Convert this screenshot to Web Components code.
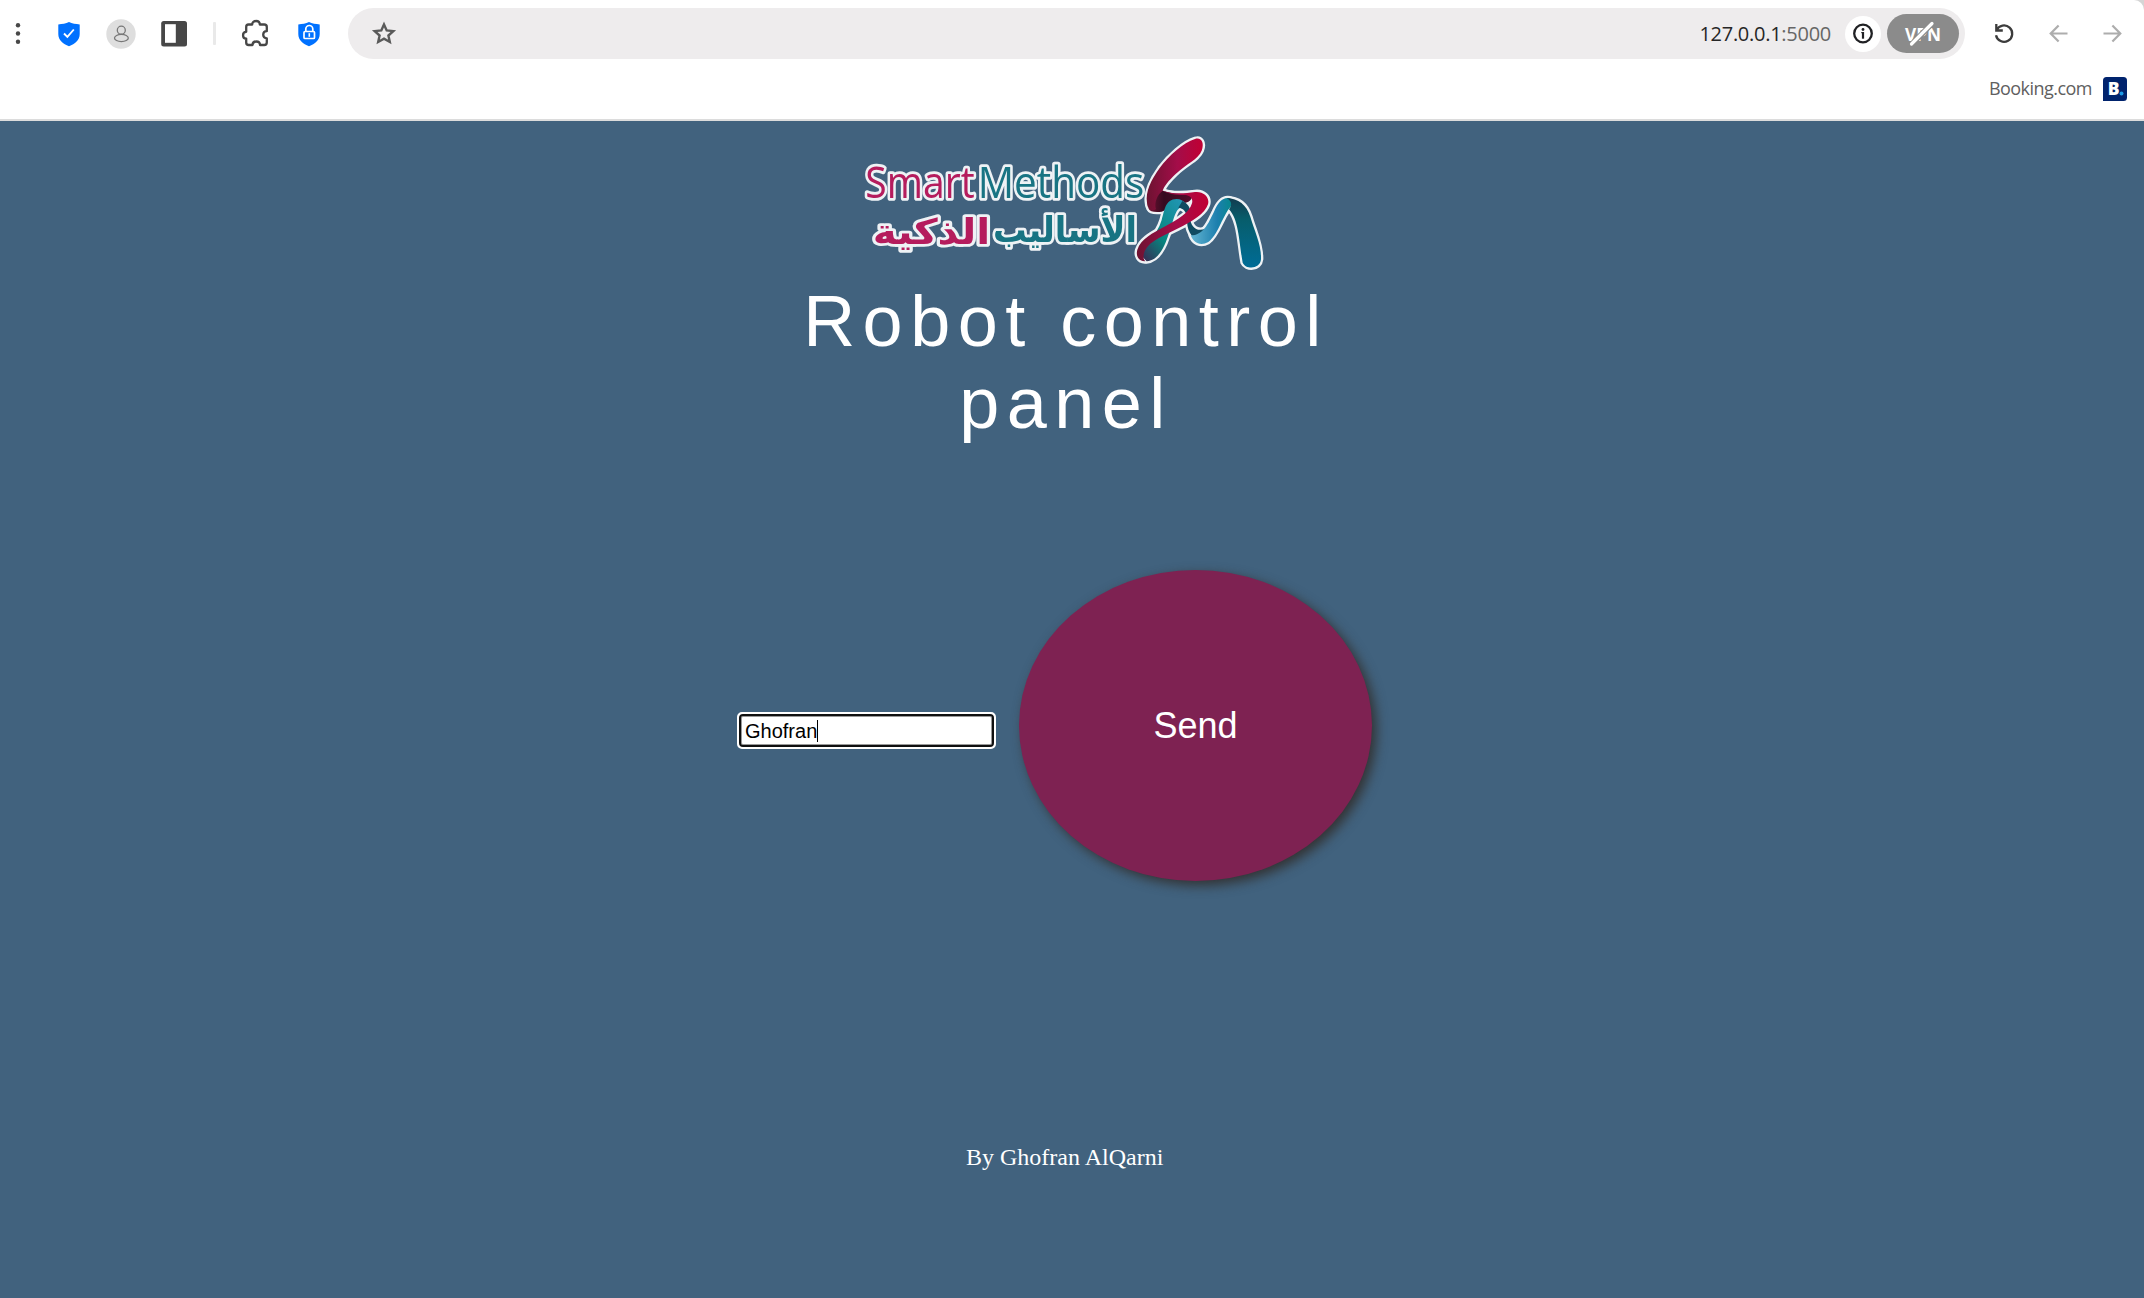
<!DOCTYPE html>
<html lang="en">
<head>
<meta charset="utf-8">
<title>Robot control panel</title>
<style>
html,body{margin:0;height:100%}
body{background:#41627e;overflow:hidden;display:flex;flex-direction:column}
</style>
</head>
<body>
<browser-bar></browser-bar>
<robot-page></robot-page>
<script>
const define=(name,html)=>customElements.define(name,class extends HTMLElement{
  constructor(){super();this.attachShadow({mode:'open'}).innerHTML=html;}
});

const shield='<path fill="#0071ff" d="M15 3.1 C18 4.8 22 5 25.7 5.4 V15 C25.7 21 21 25 15 27.2 C9 25 4.3 21 4.3 15 V5.4 C8 5 12 4.800 15 3.1Z"/>';
const icons={
 dots:'<g fill="#474747"><circle cx="15" cy="6.200" r="2.200"/><circle cx="15" cy="14.500" r="2.200"/><circle cx="15" cy="22.800" r="2.200"/></g>',
 check:shield+'<path d="M10 14.500l3.400 3.400 6.400-7.400" fill="none" stroke="#fff" stroke-width="1.900"/>',
 person:'<circle cx="15" cy="15" r="14.700" fill="#dedede"/><g fill="none" stroke="#777" stroke-width="1.300"><circle cx="15.300" cy="11.200" r="4"/><ellipse cx="15.400" cy="19" rx="6.900" ry="3.600"/></g>',
 panel:'<rect x="2.200" y="2" width="25.800" height="25.500" rx="2.500" fill="#474747"/><rect x="6" y="5.200" width="10.800" height="18.600" fill="#fff"/>',
 puzzle:'<path fill="none" stroke="#474747" stroke-width="2.300" stroke-linejoin="round" d="M8.500 5.500H12.200C12.200 0.800 19.800 0.800 19.800 5.500H24.200Q26.800 5.500 26.800 8V12.200C22 12.200 22 19.300 26.800 19.300V23.200Q26.800 26 24.200 26H20C20 21.300 12.500 21.300 12.500 26H8.700Q6.200 26 6.200 23.400V19.600C2 19.600 2 12.800 6.200 12.800V8Q6.200 5.500 8.500 5.500Z"/>',
 lock:shield+'<rect x="10" y="12.500" width="10.500" height="7" rx="1" fill="none" stroke="#fff" stroke-width="1.700"/><path d="M11.800 12.500V10a3.500 3.500 0 0 1 7 0v2.500" fill="none" stroke="#fff" stroke-width="1.700"/><path d="M15.300 14.200v3.600" stroke="#fff" stroke-width="1.600"/>',
 star:'<path fill="none" stroke="#5a5a5a" stroke-width="2.400" d="M15 5.400l2.700 6 6.600.7-4.900 4.400 1.400 6.500-5.800-3.300-5.800 3.300 1.400-6.500-4.900-4.400 6.600-.7z"/>',
 info:'<circle cx="15" cy="14.500" r="8.800" fill="none" stroke="#202124" stroke-width="2.300"/><circle cx="15" cy="10.500" r="1.400" fill="#202124"/><path d="M15 13v6.700" stroke="#202124" stroke-width="2.200"/><path d="M13.300 13.600h2" stroke="#202124" stroke-width="1.200"/>',
 reload:'<path fill="none" stroke="#3c3c3c" stroke-width="2.300" d="M7.300 5v6.500h6.500M7.600 11.100A8.200 8.200 0 1 1 7 16.200"/>',
 back:'<path fill="none" stroke="#adadad" stroke-width="2.200" d="M23.500 14.500H7M14.600 6.400L6.700 14.500l7.900 8.100"/>',
 forward:'<path fill="none" stroke="#adadad" stroke-width="2.200" d="M6.500 14.500H23M15.400 6.400l7.900 8.100-7.900 8.100"/>'
};
customElements.define('tool-icon',class extends HTMLElement{
  constructor(){super();this.attachShadow({mode:'open'});}
  connectedCallback(){
    this.shadowRoot.innerHTML='<style>:host{display:block;flex:none;width:30px;height:30px}svg{display:block;overflow:visible}</style><svg width="30" height="30" viewBox="0 0 30 30">'+icons[this.getAttribute('name')]+'</svg>';
  }
});

define('vpn-badge',`<style>
:host{display:flex;align-items:center;justify-content:center;flex:none;width:72px;height:39px;border-radius:20px;background:#8b8b8b}
svg{display:block}
</style><svg width="72" height="39" viewBox="0 0 72 39"><text x="18" y="27" textLength="36" lengthAdjust="spacingAndGlyphs" font-family="Open Sans,sans-serif" font-weight="700" font-size="18.500" fill="#fff">VPN</text><path d="M24 31L46 8.500" stroke="#8b8b8b" stroke-width="5.500"/><path d="M24.500 30L45 9.500" stroke="#fff" stroke-width="3.200" stroke-linecap="round"/></svg>`);

define('address-bar',`<style>
:host{display:flex;align-items:center;box-sizing:border-box;flex:none;width:1617px;height:51px;border-radius:26px;background:#eeeced;padding:0 6px 0 21px;font:20px/50px "Open Sans",sans-serif;color:#666}
.url{margin-left:auto;letter-spacing:-.27px;white-space:nowrap}
b{font-weight:400;color:#262626}
.info{display:flex;align-items:center;justify-content:center;width:36px;height:36px;border-radius:50%;background:#fff;margin:0 6px 0 14px}
</style><tool-icon name="star"></tool-icon><span class="url"><b>127.0.0.1</b>:5000</span><span class="info"><tool-icon name="info"></tool-icon></span><vpn-badge></vpn-badge>`);

define('booking-link',`<style>
:host{display:flex;align-items:center;justify-content:flex-end;gap:11px;height:24px;padding-right:17px;font:18px/24px "Open Sans",sans-serif;letter-spacing:-.53px;color:#606060}
span{margin-bottom:2px}
svg{display:block}
</style><span>Booking.com</span><svg width="24" height="24" viewBox="0 0 24 24"><path fill="#00236d" d="M3.500 0H20.500Q24 0 24 3.500V20.500Q24 24 20.500 24H0V3.500Q0 0 3.500 0Z"/><text x="4.800" y="18.300" font-family="Open Sans,sans-serif" font-weight="800" font-size="17.500" letter-spacing="0" fill="#fff">B</text><circle cx="18.500" cy="16.500" r="2" fill="#1a9be8"/></svg>`);

define('browser-bar',`<style>
:host{display:block;box-sizing:border-box;height:121px;flex:none;background:linear-gradient(#d5d5d5 20px,#fff 20px)}
.frame{box-sizing:border-box;height:121px;background:#fff;border-bottom:2px solid #dcdcdc;border-top-right-radius:10px;padding-top:8px}
.row{display:flex;align-items:flex-start;height:51px;padding-left:3px}
.row>tool-icon{margin-top:11px}
.sep{width:3px;height:23px;background:#e9e9e9;border-radius:1px;margin:14px 24px 0;flex:none}
booking-link{margin-top:18px}
</style><div class="frame"><div class="row">
<tool-icon name="dots"></tool-icon><tool-icon name="check" style="margin-left:21px"></tool-icon><tool-icon name="person" style="margin-left:21.500px"></tool-icon><tool-icon name="panel" style="margin-left:23.500px"></tool-icon><span class="sep"></span><tool-icon name="puzzle" style="margin-left:-.5px"></tool-icon><tool-icon name="lock" style="margin-left:24.500px"></tool-icon><address-bar style="margin-left:24px"></address-bar><tool-icon name="reload" style="margin-left:24px"></tool-icon><tool-icon name="back" style="margin-left:24.500px"></tool-icon><tool-icon name="forward" style="margin-left:23.500px"></tool-icon>
</div><booking-link></booking-link></div>`);

define('brand-logo',`<style>
:host{display:block;width:430px;height:159px}
svg{display:block;filter:blur(.5px)}
text{paint-order:stroke;stroke:#eef2f5;stroke-width:17px;stroke-linejoin:round}
.ar{font-family:"DejaVu Sans",sans-serif;font-weight:700;direction:rtl;text-anchor:start}
.en{font-family:"Open Sans",sans-serif;font-weight:500}
</style><svg width="430" height="159" viewBox="0 3 1290 477">
<defs>
<linearGradient id="red"><stop offset="0" stop-color="#6d1231"/><stop offset=".55" stop-color="#a40d49"/><stop offset="1" stop-color="#c10033"/></linearGradient>
<linearGradient id="blue"><stop offset="0" stop-color="#64b5d2"/><stop offset=".6" stop-color="#1c7fae"/><stop offset="1" stop-color="#008a85"/></linearGradient>
<linearGradient id="leg" x2="0" y2="1"><stop offset="0" stop-color="#123c50"/><stop offset=".3" stop-color="#075d6b"/><stop offset="1" stop-color="#006c96"/></linearGradient>
<linearGradient id="tail" x1="1" y1="0" x2="0" y2="1"><stop offset="0" stop-color="#2699bd"/><stop offset=".6" stop-color="#07857f"/><stop offset="1" stop-color="#3c2350"/></linearGradient>
<linearGradient id="dark"><stop offset="0" stop-color="#6d1231"/><stop offset=".35" stop-color="#350a20"/><stop offset="1" stop-color="#560c2b"/></linearGradient>
<g id="mark">
<path fill="url(#dark)" d="M935 211C960 222 1000 226 1028 219C1030 238 1015 252 990 250C960 250 955 270 935 275C912 278 900 274 896 266C902 235 920 215 935 211Z"/>
<path fill="url(#tail)" d="M935 300C944 270 945 238 980 237C1003 238 1015 255 1018 275L1000 263C975 255 970 310 954 348C942 385 924 421 890 424L872 405C880 380 920 350 935 300Z"/>
<path fill="#0f4b61" d="M997 243C1020 254 1023 270 1020 290C1021 320 1040 337 1066 326L1050 362C1022 354 1010 330 1011 295C1010 276 1000 264 985 263Z"/>
<path fill="url(#blue)" d="M1022 346C1060 346 1075 310 1092 275C1105 245 1120 230 1140 235L1155 249C1120 270 1110 340 1075 366C1050 380 1030 367 1022 346Z"/>
<path fill="url(#leg)" d="M1130 235C1165 235 1190 255 1201 290C1212 330 1235 374 1233 418C1230 449 1187 449 1178 428C1167 367 1167 300 1137 268C1146 257 1147 244 1130 235Z"/>
<path fill="url(#red)" d="M1035 57C1054 51 1064 69 1055 92C1045 118 1010 130 977 162C955 183 943 198 938 212C922 224 912 247 918 268C905 276 892 268 891 248C886 215 903 180 929 144C957 107 1000 68 1035 57Z"/>
<path fill="url(#red)" d="M938 212C970 224 1005 220 1035 216C1060 213 1080 231 1074 253C1066 280 1025 306 985 325C945 346 900 361 884 393C879 406 879 417 886 424C865 425 857 407 862 389C873 355 909 339 943 320C988 296 1017 279 1026 250C1030 235 1020 225 1003 225C975 225 952 220 938 212Z"/>
</g>
</defs>
<text class="en" x="383" y="235" font-size="134" textLength="500" lengthAdjust="spacingAndGlyphs" fill="#187483">Methods</text>
<text class="en" x="46" y="235" font-size="134" textLength="328" lengthAdjust="spacingAndGlyphs" fill="#b51c5d">Smart</text>
<text class="ar" x="861" y="366" font-size="106" textLength="432" lengthAdjust="spacingAndGlyphs" fill="#187483">الأساليب</text>
<text class="ar" x="421" y="372" font-size="106" textLength="353" lengthAdjust="spacingAndGlyphs" fill="#b51c5d">الذكية</text>
<use href="#mark" stroke="#eef2f5" stroke-width="14" stroke-linejoin="round"/><use href="#mark"/>
</svg>`);

define('page-heading',`<style>:host{display:block;width:600px}h1{margin:0;font:400 72px/82px "Liberation Sans",sans-serif;letter-spacing:7.5px;text-align:center;color:#fff}</style><h1><slot></slot></h1>`);

define('name-field',`<style>
:host{display:flex;align-items:center;box-sizing:border-box;width:259px;height:37px;border:2px solid #fff;border-radius:5px;background:#fff}
.box{display:flex;align-items:center;box-sizing:border-box;width:100%;height:33px;border:2px solid #101010;border-radius:4px;padding-left:4px;font:20px/24px "Liberation Sans",sans-serif;color:#000;box-shadow:inset 0 0 0 1px #999}
i{width:1px;height:22px;background:#000}
</style><div class="box" role="textbox"><slot></slot><i></i></div>`);

define('send-button',`<style>
:host{display:block;width:353px;height:311px}
button{display:block;width:100%;height:100%;padding:0;border:0;border-radius:50%;background:#7e2252;color:#fff;font:36px/41px "Liberation Sans",sans-serif;box-shadow:4.500px 4.500px 12px #333}
</style><button><slot></slot></button>`);

define('robot-page',`<style>
:host{display:flex;flex-direction:column;flex:1;background:#41627e}
brand-logo{margin-left:850px}
page-heading{margin:0 0 0 766px}
.form{display:flex;align-items:center;gap:23px;margin:126px 0 0 737px}
name-field{margin-top:10px}
footer{margin:262px 0 0 966px;font:24px/28px "Liberation Serif",serif;color:#fff}
</style><brand-logo></brand-logo><page-heading>Robot control panel</page-heading>
<div class="form"><name-field>Ghofran</name-field><send-button>Send</send-button></div>
<footer>By Ghofran AlQarni</footer>`);
</script>
</body>
</html>
